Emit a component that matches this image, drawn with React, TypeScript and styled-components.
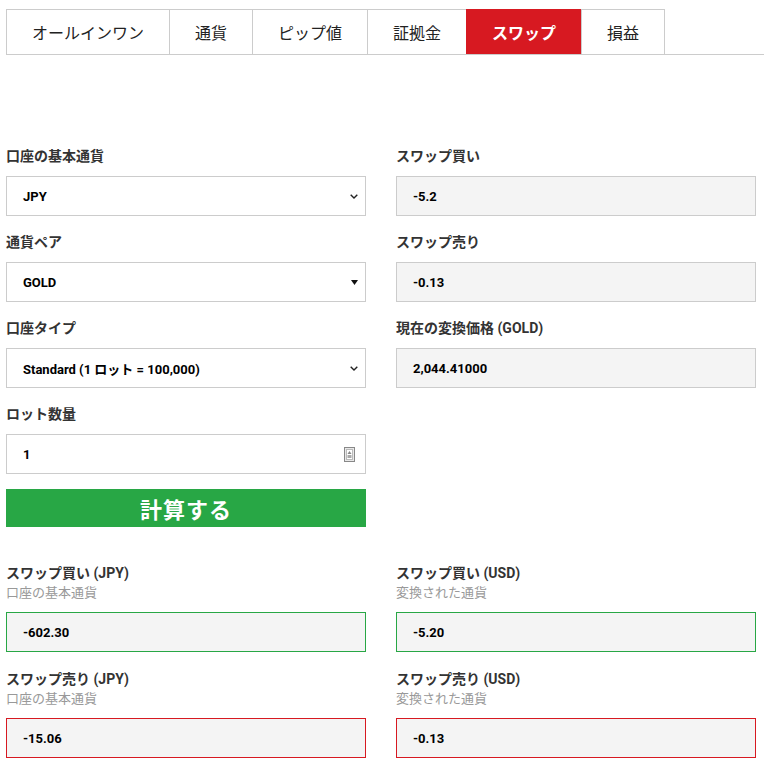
import React from "react";
import styled, { createGlobalStyle } from "styled-components";

const Global = createGlobalStyle`
  html, body { margin: 0; padding: 0; background: #fff; }
  body { font-family: Roboto, "Noto Sans CJK JP", sans-serif; color: #333; }
  * { box-sizing: border-box; }
`;

const Page = styled.div`
  width: 764px;
  padding: 9px 0 0 6px;
`;

const TabBar = styled.div`
  display: flex;
  border-bottom: 1px solid #ccc;
  height: 46px;
`;

const Tab = styled.div<{ $active?: boolean }>`
  height: 45px;
  padding: 0 25px;
  display: flex;
  align-items: center;
  justify-content: center;
  font-size: 16px;
  font-weight: ${(p) => (p.$active ? 700 : 400)};
  color: ${(p) => (p.$active ? "#fff" : "#222")};
  background: ${(p) => (p.$active ? "#d71921" : "#fff")};
  border: 1px solid ${(p) => (p.$active ? "#d71921" : "#ccc")};
  border-bottom: none;
  margin-left: -1px;
  &:first-child { margin-left: 0; }
  white-space: nowrap;
`;

const Form = styled.div`
  display: grid;
  grid-template-columns: 360px 360px;
  column-gap: 30px;
  padding-top: 91px;
`;

const Column = styled.div`
  display: flex;
  flex-direction: column;
`;

const Field = styled.div<{ $gap?: number }>`
  display: flex;
  flex-direction: column;
  margin-bottom: ${(p) => p.$gap ?? 16}px;
`;

const Label = styled.div`
  font-size: 14px;
  font-weight: 700;
  line-height: 20px;
  color: #333;
  margin-bottom: 10px;
`;

const ResultLabel = styled(Label)`
  margin-bottom: 0;
`;

const Sub = styled.div`
  font-size: 13px;
  line-height: 20px;
  color: #999;
  margin-bottom: 9px;
`;

const Box = styled.div<{ $readonly?: boolean; $tone?: "green" | "red" }>`
  height: 40px;
  display: flex;
  align-items: center;
  justify-content: space-between;
  padding: 0 7px 0 16px;
  border: 1px solid
    ${(p) => (p.$tone === "green" ? "#28a745" : p.$tone === "red" ? "#d71921" : "#ccc")};
  background: ${(p) => (p.$readonly ? "#f4f4f4" : "#fff")};
  font-size: 13px;
  font-weight: 700;
  color: #000;
`;

const Chevron = () => (
  <svg width="8" height="5" viewBox="0 0 8 5">
    <path d="M0.7 0.7 L4 4 L7.3 0.7" fill="none" stroke="#222" strokeWidth="1.4" />
  </svg>
);

const Triangle = () => (
  <svg width="7" height="5" viewBox="0 0 7 5">
    <path d="M0 0 H7 L3.5 5 Z" fill="#111" />
  </svg>
);

const Spinner = () => (
  <svg width="11" height="15" viewBox="0 0 11 15" style={{ marginRight: 3 }}>
    <rect x="0.5" y="0.5" width="10" height="14" fill="#e8e8e8" stroke="#888" />
    <rect x="2.5" y="2.5" width="6" height="10" fill="#fff" stroke="#bbb" />
    <path d="M5.5 4 L7.5 7 H3.5 Z" fill="#888" />
    <rect x="3.5" y="8" width="4" height="3" fill="#aaa" />
  </svg>
);

const Button = styled.button`
  height: 38px;
  width: 100%;
  margin-top: -1px;
  border: none;
  background: #28a745;
  color: #fff;
  font-family: Roboto, "Noto Sans CJK JP", sans-serif;
  font-size: 22px;
  font-weight: 700;
  letter-spacing: 1px;
  cursor: pointer;
`;

const Results = styled.div`
  display: grid;
  grid-template-columns: 360px 360px;
  column-gap: 30px;
  padding-top: 36px;
`;

const tabs = ["オールインワン", "通貨", "ピップ値", "証拠金", "スワップ", "損益"];

export default function App() {
  return (
    <Page>
      <Global />
      <TabBar>
        {tabs.map((t) => (
          <Tab key={t} $active={t === "スワップ"}>
            {t}
          </Tab>
        ))}
      </TabBar>
      <Form>
        <Column>
          <Field>
            <Label>口座の基本通貨</Label>
            <Box>
              <span>JPY</span>
              <Chevron />
            </Box>
          </Field>
          <Field>
            <Label>通貨ペア</Label>
            <Box>
              <span>GOLD</span>
              <Triangle />
            </Box>
          </Field>
          <Field>
            <Label>口座タイプ</Label>
            <Box>
              <span>Standard (1 ロット = 100,000)</span>
              <Chevron />
            </Box>
          </Field>
          <Field>
            <Label>ロット数量</Label>
            <Box>
              <span>1</span>
              <Spinner />
            </Box>
          </Field>
          <Button>計算する</Button>
        </Column>
        <Column>
          <Field>
            <Label>スワップ買い</Label>
            <Box $readonly>-5.2</Box>
          </Field>
          <Field>
            <Label>スワップ売り</Label>
            <Box $readonly>-0.13</Box>
          </Field>
          <Field>
            <Label>現在の変換価格 (GOLD)</Label>
            <Box $readonly>2,044.41000</Box>
          </Field>
        </Column>
      </Form>
      <Results>
        <Column>
          <Field $gap={17}>
            <ResultLabel>スワップ買い (JPY)</ResultLabel>
            <Sub>口座の基本通貨</Sub>
            <Box $readonly $tone="green">-602.30</Box>
          </Field>
          <Field>
            <ResultLabel>スワップ売り (JPY)</ResultLabel>
            <Sub>口座の基本通貨</Sub>
            <Box $readonly $tone="red">-15.06</Box>
          </Field>
        </Column>
        <Column>
          <Field $gap={17}>
            <ResultLabel>スワップ買い (USD)</ResultLabel>
            <Sub>変換された通貨</Sub>
            <Box $readonly $tone="green">-5.20</Box>
          </Field>
          <Field>
            <ResultLabel>スワップ売り (USD)</ResultLabel>
            <Sub>変換された通貨</Sub>
            <Box $readonly $tone="red">-0.13</Box>
          </Field>
        </Column>
      </Results>
    </Page>
  );
}
